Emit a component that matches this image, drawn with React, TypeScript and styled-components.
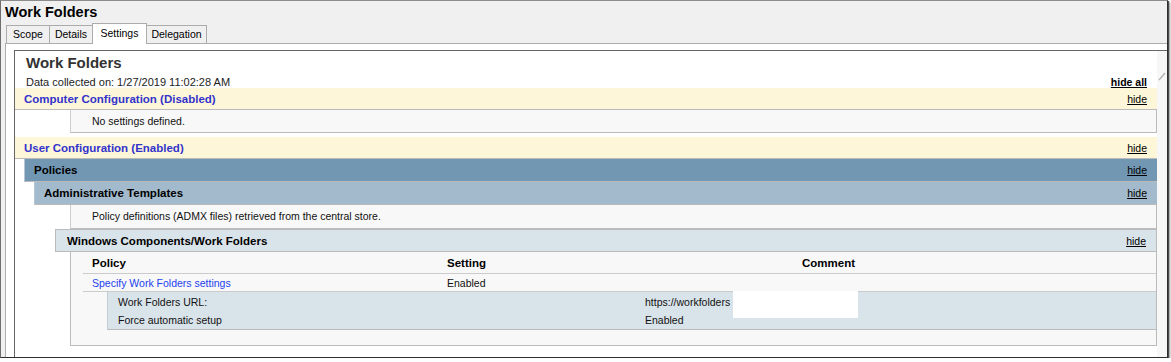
import React from "react";
import styled, { createGlobalStyle } from "styled-components";

const GlobalStyle = createGlobalStyle`
  html, body {
    margin: 0;
    padding: 0;
    background: #fff;
    overflow: hidden;
  }
  body {
    font-family: "Liberation Sans", Arial, sans-serif;
    color: #000;
  }
`;

interface Tab {
  label: string;
  width: number;
}

const tabs: Tab[] = [
  { label: "Scope", width: 44 },
  { label: "Details", width: 44 },
  { label: "Settings", width: 55 },
  { label: "Delegation", width: 61 },
];

function HideLink({ all }: { all?: boolean }) {
  return <Hide $bold={all}>{all ? "hide all" : "hide"}</Hide>;
}

function App() {
  return (
    <>
      <GlobalStyle />
      <Window>
        <Title>Work Folders</Title>
        <TabStrip>
          {tabs.map((t) => (
            <TabButton key={t.label} $w={t.width} $active={t.label === "Settings"}>
              {t.label}
            </TabButton>
          ))}
        </TabStrip>
        <TabPanel>
          <Browser>
            <Page>
              <Header>
                <Heading>Work Folders</Heading>
                <DataRow>
                  <span>Data collected on: 1/27/2019 11:02:28 AM</span>
                  <HideLink all />
                </DataRow>
              </Header>

              <ConfigHeader>
                <span>Computer Configuration (Disabled)</span>
                <HideLink />
              </ConfigHeader>
              <InfoBox $gap={4}>No settings defined.</InfoBox>

              <ConfigHeader>
                <span>User Configuration (Enabled)</span>
                <HideLink />
              </ConfigHeader>
              <GroupHeader $level={1}>
                <span>Policies</span>
                <HideLink />
              </GroupHeader>
              <GroupHeader $level={2}>
                <span>Administrative Templates</span>
                <HideLink />
              </GroupHeader>
              <InfoBox $gap={0}>Policy definitions (ADMX files) retrieved from the central store.</InfoBox>
              <GroupHeader $level={3}>
                <span>Windows Components/Work Folders</span>
                <HideLink />
              </GroupHeader>

              <PolicyBox>
                <HeadRow>
                  <Cell>Policy</Cell>
                  <Cell>Setting</Cell>
                  <Cell>Comment</Cell>
                </HeadRow>
                <PolicyRow>
                  <Cell>
                    <PolicyLink>Specify Work Folders settings</PolicyLink>
                  </Cell>
                  <Cell>Enabled</Cell>
                  <Cell />
                </PolicyRow>
                <SubBox>
                  <SubRow $h={19}>
                    <SubLabel>Work Folders URL:</SubLabel>
                    <SubValue>
                      https://workfolders
                      <Redact />
                    </SubValue>
                  </SubRow>
                  <SubRow $h={18}>
                    <SubLabel>Force automatic setup</SubLabel>
                    <SubValue>Enabled</SubValue>
                  </SubRow>
                </SubBox>
                <BoxFoot />
              </PolicyBox>
            </Page>
            <ScrollTrack>
              <svg width="9" height="12" viewBox="0 0 9 12">
                <polyline points="2,10 8,3" fill="none" stroke="#b4b4b4" strokeWidth="1.4" />
              </svg>
            </ScrollTrack>
          </Browser>
        </TabPanel>
      </Window>
    </>
  );
}

export default App;

const Window = styled.div`
  box-sizing: border-box;
  width: 1168px;
  height: 358px;
  display: flex;
  flex-direction: column;
  background: #f0f0f0;
  border-top: 1px solid #8c8c8c;
  border-left: 1px solid #6e6e6e;
  border-right: 1px solid #2e2e2e;
  border-bottom: 1px solid #2e2e2e;
  box-shadow: 1px 1px 0 #4a4a4a, 2px 2px 2px rgba(0, 0, 0, 0.45);
  overflow: hidden;
`;

const Title = styled.div`
  height: 22px;
  line-height: 22px;
  padding-left: 4px;
  font-size: 14.5px;
  font-weight: bold;
`;

const TabStrip = styled.div`
  display: flex;
  align-items: flex-end;
  height: 20px;
  padding-left: 5px;
  position: relative;
  z-index: 1;
`;

const TabButton = styled.div<{ $w: number; $active?: boolean }>`
  box-sizing: border-box;
  width: ${(p) => p.$w}px;
  height: ${(p) => (p.$active ? 21 : 18)}px;
  margin-bottom: ${(p) => (p.$active ? -1 : 0)}px;
  border: 1px solid #acacac;
  border-bottom: none;
  background: ${(p) => (p.$active ? "#fff" : "#f0f0f0")};
  font-size: 10.5px;
  line-height: ${(p) => (p.$active ? 18 : 17)}px;
  text-align: center;
  color: #000;

  & + & {
    margin-left: -1px;
  }
`;

const TabPanel = styled.div`
  flex: 1;
  min-height: 0;
  display: flex;
  margin-left: 4px;
  padding: 6px 0 0 8px;
  background: #fff;
  border-top: 1px solid #adadad;
  border-left: 1px solid #adadad;
`;

const Browser = styled.div`
  flex: 1;
  display: flex;
  min-height: 0;
  overflow: hidden;
  border-top: 1px solid #666;
  border-left: 1px solid #666;
`;

const Page = styled.div`
  position: relative;
  width: 1142px;
  flex-shrink: 0;
  background: #fff;
  font-size: 10.5px;
  color: #111;
`;

const ScrollTrack = styled.div`
  flex: 1;
  background: #f7f7f7;
  padding-top: 17px;
`;

const Header = styled.div`
  padding: 2px 10px 0 11px;
`;

const Heading = styled.div`
  font-size: 15px;
  font-weight: bold;
  line-height: 20px;
  color: #333;
`;

const DataRow = styled.div`
  display: flex;
  justify-content: space-between;
  align-items: baseline;
  height: 15px;
  line-height: 18px;
  font-size: 11px;
  color: #222;
`;

const Hide = styled.span<{ $bold?: boolean }>`
  font-size: 10.5px;
  font-weight: ${(p) => (p.$bold ? "bold" : "normal")};
  color: #000;
  text-decoration: underline;
  cursor: pointer;
`;

const ConfigHeader = styled.div`
  display: flex;
  justify-content: space-between;
  align-items: center;
  height: 21px;
  padding: 0 10px 0 9px;
  background: #fdf6d8;
  border-bottom: 1px solid #bbb;
  color: #3333cc;
  font-size: 11.5px;
  font-weight: bold;
`;

const levelStyle: Record<number, { bg: string; indent: number; pad: number }> = {
  1: { bg: "#7197b3", indent: 9, pad: 9 },
  2: { bg: "#a2bacc", indent: 19, pad: 9 },
  3: { bg: "#d9e3ea", indent: 40, pad: 11 },
};

const GroupHeader = styled.div<{ $level: number }>`
  box-sizing: border-box;
  display: flex;
  justify-content: space-between;
  align-items: center;
  height: 23px;
  margin-left: ${(p) => levelStyle[p.$level].indent}px;
  padding: 0 10px 0 ${(p) => levelStyle[p.$level].pad}px;
  background: ${(p) => levelStyle[p.$level].bg};
  border-left: 1px solid ${(p) => (p.$level === 3 ? "#bbb" : "#b4c6d4")};
  border-bottom: 1px solid #bbb;
  border-top: ${(p) => (p.$level === 3 ? "1px solid #bbb" : "none")};
  border-right: ${(p) => (p.$level === 3 ? "1px solid #bbb" : "none")};
  color: #000;
  font-size: 11.5px;
  font-weight: bold;
`;

const InfoBox = styled.div<{ $gap: number }>`
  box-sizing: border-box;
  height: ${(p) => (p.$gap ? 23 : 24)}px;
  line-height: 22px;
  margin: 0 0 ${(p) => p.$gap}px 55px;
  padding-left: 21px;
  background: #f8f8f8;
  border-left: 1px solid #ccc;
  border-right: 1px solid #bbb;
  border-bottom: 1px solid #bbb;
  color: #111;
`;

const PolicyBox = styled.div`
  margin-left: 55px;
  padding-left: 12px;
  background: #f8f8f8;
  border-left: 1px solid #bbb;
  border-right: 1px solid #bbb;
  border-bottom: 1px solid #bbb;
`;

const HeadRow = styled.div`
  display: grid;
  grid-template-columns: 355px 355px 1fr;
  align-items: center;
  height: 21px;
  border-bottom: 1px solid #cbcbcb;
  font-size: 11.5px;
  font-weight: bold;
  color: #000;
`;

const PolicyRow = styled.div`
  display: grid;
  grid-template-columns: 355px 355px 1fr;
  align-items: center;
  height: 17px;
  border-bottom: 1px solid #cbcbcb;
`;

const Cell = styled.div`
  padding-left: 9px;
  white-space: nowrap;
`;

const PolicyLink = styled.span`
  color: #2342ee;
  cursor: pointer;
`;

const SubBox = styled.div`
  margin-left: 24px;
  background: #d9e3ea;
  border-left: 1px solid #c2ccd4;
  border-bottom: 1px solid #bbb;
`;

const SubRow = styled.div<{ $h: number }>`
  display: grid;
  grid-template-columns: 537px 1fr;
  align-items: center;
  height: ${(p) => p.$h}px;
`;

const SubLabel = styled.div`
  padding-left: 10px;
`;

const SubValue = styled.div`
  position: relative;
  white-space: nowrap;
`;

const Redact = styled.span`
  position: absolute;
  left: 88px;
  top: -5px;
  width: 125px;
  height: 27px;
  background: #fff;
`;

const BoxFoot = styled.div`
  height: 15px;
`;
